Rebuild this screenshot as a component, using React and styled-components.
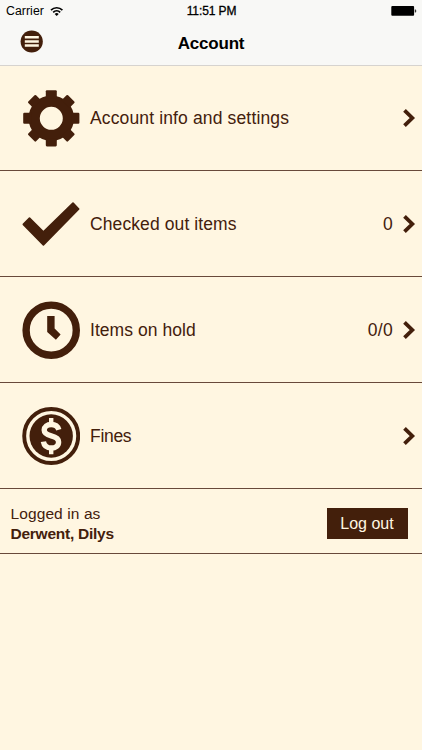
import React from "react";
import styled, { createGlobalStyle } from "styled-components";

function App() {
  return (
    <Screen>
      <GlobalStyle />
      <Header>
        <StatusBar>
          <Carrier>
            <CarrierName>Carrier</CarrierName>
            <WifiIcon />
          </Carrier>
          <Clock>11:51 PM</Clock>
          <BatteryIcon />
        </StatusBar>
        <NavBar>
          <MenuButton aria-label="Menu">
            <MenuIcon />
          </MenuButton>
          <Title>Account</Title>
        </NavBar>
      </Header>
      <Menu>
        <MenuRow icon={<GearIcon />} label="Account info and settings" spacing="0.14px" />
        <MenuRow icon={<CheckIcon />} label="Checked out items" count="0" spacing="0.1px" />
        <MenuRow icon={<ClockIcon />} label="Items on hold" count="0/0" spacing="0.05px" />
        <MenuRow icon={<DollarIcon />} label="Fines" spacing="-0.3px" />
      </Menu>
      <Footer>
        <User>
          <UserText>Logged in as</UserText>
          <UserName>Derwent, Dilys</UserName>
        </User>
        <LogoutBtn>Log out</LogoutBtn>
      </Footer>
    </Screen>
  );
}

export default App;

function MenuRow({ icon, label, count, spacing }) {
  return (
    <Row>
      {icon}
      <Label $spacing={spacing}>{label}</Label>
      {count && <Count>{count}</Count>}
      <ChevronIcon />
    </Row>
  );
}

function WifiIcon() {
  return (
    <svg width="14" height="11" viewBox="0 0 14 11" fill="none" stroke="#000" strokeWidth="1.7">
      <path d="M1 4.1a8.1 8.1 0 0 1 11.4 0" />
      <path d="M3.2 6.3a5 5 0 0 1 7 0" />
      <path d="M6.7 10 4.7 8a2.9 2.9 0 0 1 4 0z" fill="#000" stroke="none" />
    </svg>
  );
}

function BatteryIcon() {
  return (
    <svg width="26" height="11" viewBox="0 0 26 11">
      <rect x="0.3" y="0" width="22.8" height="9.8" rx="1" fill="#000" />
      <path d="M23.8 3.6h0.6a0.8 0.8 0 0 1 0.8 0.8v1.4a0.8 0.8 0 0 1-0.8 0.8h-0.6z" fill="#333" />
    </svg>
  );
}

function MenuIcon() {
  return (
    <svg width="23" height="23" viewBox="0 0 23 23">
      <circle cx="11.7" cy="11.5" r="11.1" fill="#431f0b" />
      <path d="M4.8 6.1h14v2.5h-14zM4.8 10.2h14v2.5h-14zM4.8 14.3h14v2.5h-14z" fill="#fff6e1" />
    </svg>
  );
}

function GearIcon() {
  return (
    <svg width="58" height="58" viewBox="-29.3 -29.3 58 58">
      <circle r="17.1" fill="none" stroke="#431f0b" strokeWidth="11.2" />
      {[0, 45, 90, 135, 180, 225, 270, 315].map((angle) => (
        <path
          key={angle}
          d="M-5.5-20v-7q0-1.1 1.1-1.1h8.8q1.1 0 1.1 1.1v7z"
          transform={`rotate(${angle})`}
          fill="#431f0b"
        />
      ))}
    </svg>
  );
}

function CheckIcon() {
  return (
    <svg width="58" height="58" viewBox="-29 -29 58 58">
      <path
        d="M-28.3-.2l6.2-6.3q.6-.4 1.2 0l13.3 13.2 29-28.2q.6-.4 1.2 0l5.7 6q.4.6 0 1.1L-7 21.4q-.6.5-1.2 0L-28.3.9q-.4-.6 0-1.1z"
        fill="#431f0b"
      />
    </svg>
  );
}

function ClockIcon() {
  return (
    <svg width="58" height="58" viewBox="-29.2 -29.2 58 58">
      <circle r="25.1" fill="none" stroke="#431f0b" strokeWidth="7.4" />
      <path d="M-4-14.3h7.4v12.7l6 6L4.7 9.5-4 1.9z" fill="#431f0b" />
    </svg>
  );
}

function DollarIcon() {
  return (
    <svg width="58" height="58" viewBox="-29.2 -29 58 58">
      <circle r="27" fill="none" stroke="#431f0b" strokeWidth="3.9" />
      <circle r="21.7" fill="#431f0b" />
      <g fill="none" stroke="#fff6e1">
        <path d="M0-18v5M0 13v5.2" strokeWidth="4.4" />
        <path
          d="M7.6-6.2C6.6-9.8 3.6-11.5 0-11.5c-4.2 0-7 2.2-7 5.6 0 3.6 3 4.8 7 5.8 4.5 1.1 7.4 2.4 7.4 6 0 3.8-3 6.1-7.2 6.1-4.4 0-7.3-2.2-8-6.4"
          strokeWidth="5.4"
        />
      </g>
    </svg>
  );
}

function ChevronIcon() {
  return (
    <svg width="13" height="18" viewBox="0 0 13 18" fill="none" stroke="#431f0b" strokeWidth="3.8">
      <path d="M1.5 1.4 9.3 9l-7.8 7.6" />
    </svg>
  );
}

const GlobalStyle = createGlobalStyle`
  body {
    margin: 0;
    background-color: #fff6e1;
  }
`;

const Screen = styled.div`
  min-height: 750px;
  background-color: #fff6e1;
  color: #43200c;
  font-family: "Liberation Sans", Arial, sans-serif;
`;

const Header = styled.header`
  box-sizing: border-box;
  height: 66px;
  background-color: #f8f8f6;
  border-bottom: 1px solid #d6d3cf;
  color: #000;
`;

const StatusBar = styled.div`
  display: grid;
  grid-template-columns: 1fr auto 1fr;
  align-items: center;
  height: 22px;
  padding: 0px 5px 0px 6px;

  > svg {
    justify-self: end;
  }
`;

const Carrier = styled.div`
  display: flex;
  align-items: center;
  gap: 6px;
`;

const CarrierName = styled.span`
  font-size: 12.3px;
  letter-spacing: 0.05px;
`;

const Clock = styled.span`
  font-size: 12px;
  -webkit-text-stroke: 0.3px #000;
  letter-spacing: -0.1px;
`;

const NavBar = styled.div`
  display: grid;
  grid-template-columns: 1fr auto 1fr;
  align-items: center;
  height: 42px;
  padding: 0px 20px;
`;

const MenuButton = styled.button`
  display: flex;
  width: 23px;
  padding: 0;
  margin-bottom: 3px;
  border: none;
  background: none;
`;

const Title = styled.h1`
  margin: 0;
  padding-top: 2px;
  font-size: 17px;
  font-weight: bold;
  letter-spacing: -0.2px;
`;

const Menu = styled.main`
  display: flex;
  flex-direction: column;
`;

const Row = styled.div`
  display: flex;
  align-items: center;
  box-sizing: border-box;
  height: 106px;
  padding: 0px 6px 0px 22px;
  border-bottom: 1px solid #68493a;

  &:first-child {
    height: 105px;
  }
`;

const Label = styled.span`
  flex: 1;
  margin-left: 10px;
  padding-top: 1px;
  font-size: 17.5px;
  letter-spacing: ${(props) => props.$spacing};
`;

const Count = styled.span`
  margin-right: 10px;
  padding-top: 1px;
  font-size: 17.5px;
  letter-spacing: 0.3px;
`;

const Footer = styled.footer`
  display: flex;
  justify-content: space-between;
  align-items: center;
  box-sizing: border-box;
  height: 65px;
  padding: 5px 14px 0px 10.5px;
  border-bottom: 1px solid #68493a;
`;

const User = styled.div`
  display: flex;
  flex-direction: column;
  font-size: 15.5px;
  line-height: 20px;
`;

const UserText = styled.span`
  letter-spacing: 0.1px;
`;

const UserName = styled.span`
  font-weight: bold;
  letter-spacing: -0.25px;
`;

const LogoutBtn = styled.button`
  width: 81px;
  height: 31px;
  padding: 1px 1px 0px 0px;
  border: none;
  background-color: #431f0b;
  color: #fff6e1;
  font-family: inherit;
  font-size: 16px;
`;
